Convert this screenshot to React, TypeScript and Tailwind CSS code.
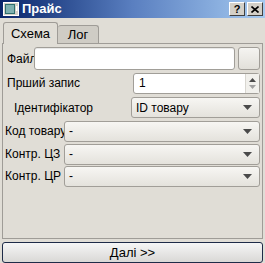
export default function App() {
  const font = { fontFamily: "'Liberation Sans', Arial, sans-serif" };

  const Combo = ({ text }: { text: string }) => (
    <div className="flex h-[21px] flex-1 items-center justify-between rounded-[3px] border border-[#a19e98] bg-gradient-to-b from-[#f7f6f3] to-[#e4e2dc] pl-[4px] pr-[7px] text-[12px] text-black">
      <span>{text}</span>
      <svg width="9" height="5" viewBox="0 0 9 5">
        <path d="M0 0 H9 L4.5 5 Z" fill="#4a4a4a" />
      </svg>
    </div>
  );

  return (
    <div className="flex h-[263px] w-[265px] flex-col overflow-hidden whitespace-nowrap bg-[#e0ddd6] text-[12px] text-black" style={font}>
      {/* title bar */}
      <div className="flex h-[18px] items-center bg-gradient-to-r from-[#0a246a] via-[#5a7fc0] to-[#a6caf0] pl-[3px] pr-[2px]">
        <svg width="16" height="14" viewBox="0 0 16 14">
          <rect x="0.5" y="0.5" width="15" height="13" fill="#d4d0c8" stroke="#fff" />
          <rect x="2" y="2" width="10" height="10" fill="#2f6f6f" />
          <rect x="3" y="3" width="8" height="8" fill="#7fb0b0" />
          <rect x="13" y="4" width="1.5" height="5" fill="#fff" />
        </svg>
        <span className="ml-[3px] text-[13px] font-bold text-white">Прайс</span>
        <div className="ml-auto flex gap-[2px]">
          <div className="flex h-[14px] w-[16px] items-center justify-center border border-b-[#404040] border-l-white border-r-[#404040] border-t-white bg-[#d4d0c8] text-[11px] font-bold leading-none">?</div>
          <div className="flex h-[14px] w-[16px] items-center justify-center border border-b-[#404040] border-l-white border-r-[#404040] border-t-white bg-[#d4d0c8]">
            <svg width="8" height="7" viewBox="0 0 8 7">
              <path d="M0.5 0.5 L7.5 6.5 M7.5 0.5 L0.5 6.5" stroke="#000" strokeWidth="1.6" />
            </svg>
          </div>
        </div>
      </div>

      {/* tabs */}
      <div className="mt-[3px] flex h-[22px] items-end pl-[3px]">
        <div className="z-10 -mb-px flex h-[22px] w-[55px] items-center justify-center rounded-t-[3px] border border-b-0 border-[#9f9c97] bg-[#e0ddd6] text-[13px]">
          Схема
        </div>
        <div className="flex h-[18px] w-[41px] items-center justify-center rounded-t-[3px] border border-b-0 border-l-0 border-[#9f9c97] bg-[#cfccc5] text-[13px]">
          Лог
        </div>
      </div>

      {/* panel */}
      <div className="mx-[2px] flex h-[197px] flex-col border border-[#9f9c97] px-[2px] pt-[3px]">
        <div className="flex h-[24px] items-center gap-[1px]">
          <span className="w-[28px] pl-[2px]">Файл</span>
          <div className="h-[23px] flex-1 rounded-[3px] border border-[#a19e98] bg-white shadow-[inset_0_1px_1px_rgba(0,0,0,0.1)]" />
          <div className="ml-[2px] h-[23px] w-[22px] rounded-[3px] border border-[#a19e98] bg-gradient-to-b from-[#f5f4f1] to-[#e2e0da]" />
        </div>

        <div className="mt-[1px] flex h-[23px] items-center">
          <span className="w-[128px] pl-[2px]">Прший запис</span>
          <div className="flex h-[21px] flex-1 items-stretch rounded-[3px] border border-[#a19e98] bg-white">
            <span className="flex flex-1 items-center pl-[5px]">1</span>
            <div className="flex w-[14px] flex-col items-center justify-center gap-[3px] border-l border-[#d8d6d0] bg-[#f1f0ec]">
              <svg width="7" height="4" viewBox="0 0 7 4">
                <path d="M0 4 L3.5 0 L7 4 Z" fill="#4a4a4a" />
              </svg>
              <svg width="7" height="4" viewBox="0 0 7 4">
                <path d="M0 0 H7 L3.5 4 Z" fill="#a0a0a0" />
              </svg>
            </div>
          </div>
        </div>

        <div className="mt-[2px] flex h-[22px] items-center">
          <span className="w-[126px] pl-[9px]">Ідентифікатор</span>
          <Combo text="ID товару" />
        </div>

        <div className="mt-[2px] flex h-[21px] items-center">
          <span className="w-[59px]">Код товару</span>
          <Combo text="-" />
        </div>
        <div className="mt-[2px] flex h-[21px] items-center">
          <span className="w-[59px]">Контр. ЦЗ</span>
          <Combo text="-" />
        </div>
        <div className="mt-[1px] flex h-[21px] items-center">
          <span className="w-[59px]">Контр. ЦР</span>
          <Combo text="-" />
        </div>
      </div>

      <div className="mx-[2px] mt-[3px] flex h-[21px] items-center justify-center rounded-[3px] border border-[#1e2b48] bg-gradient-to-b from-[#f6f6f6] to-[#d9d8d6] text-[13px]">
        Далі &gt;&gt;
      </div>
    </div>
  );
}
